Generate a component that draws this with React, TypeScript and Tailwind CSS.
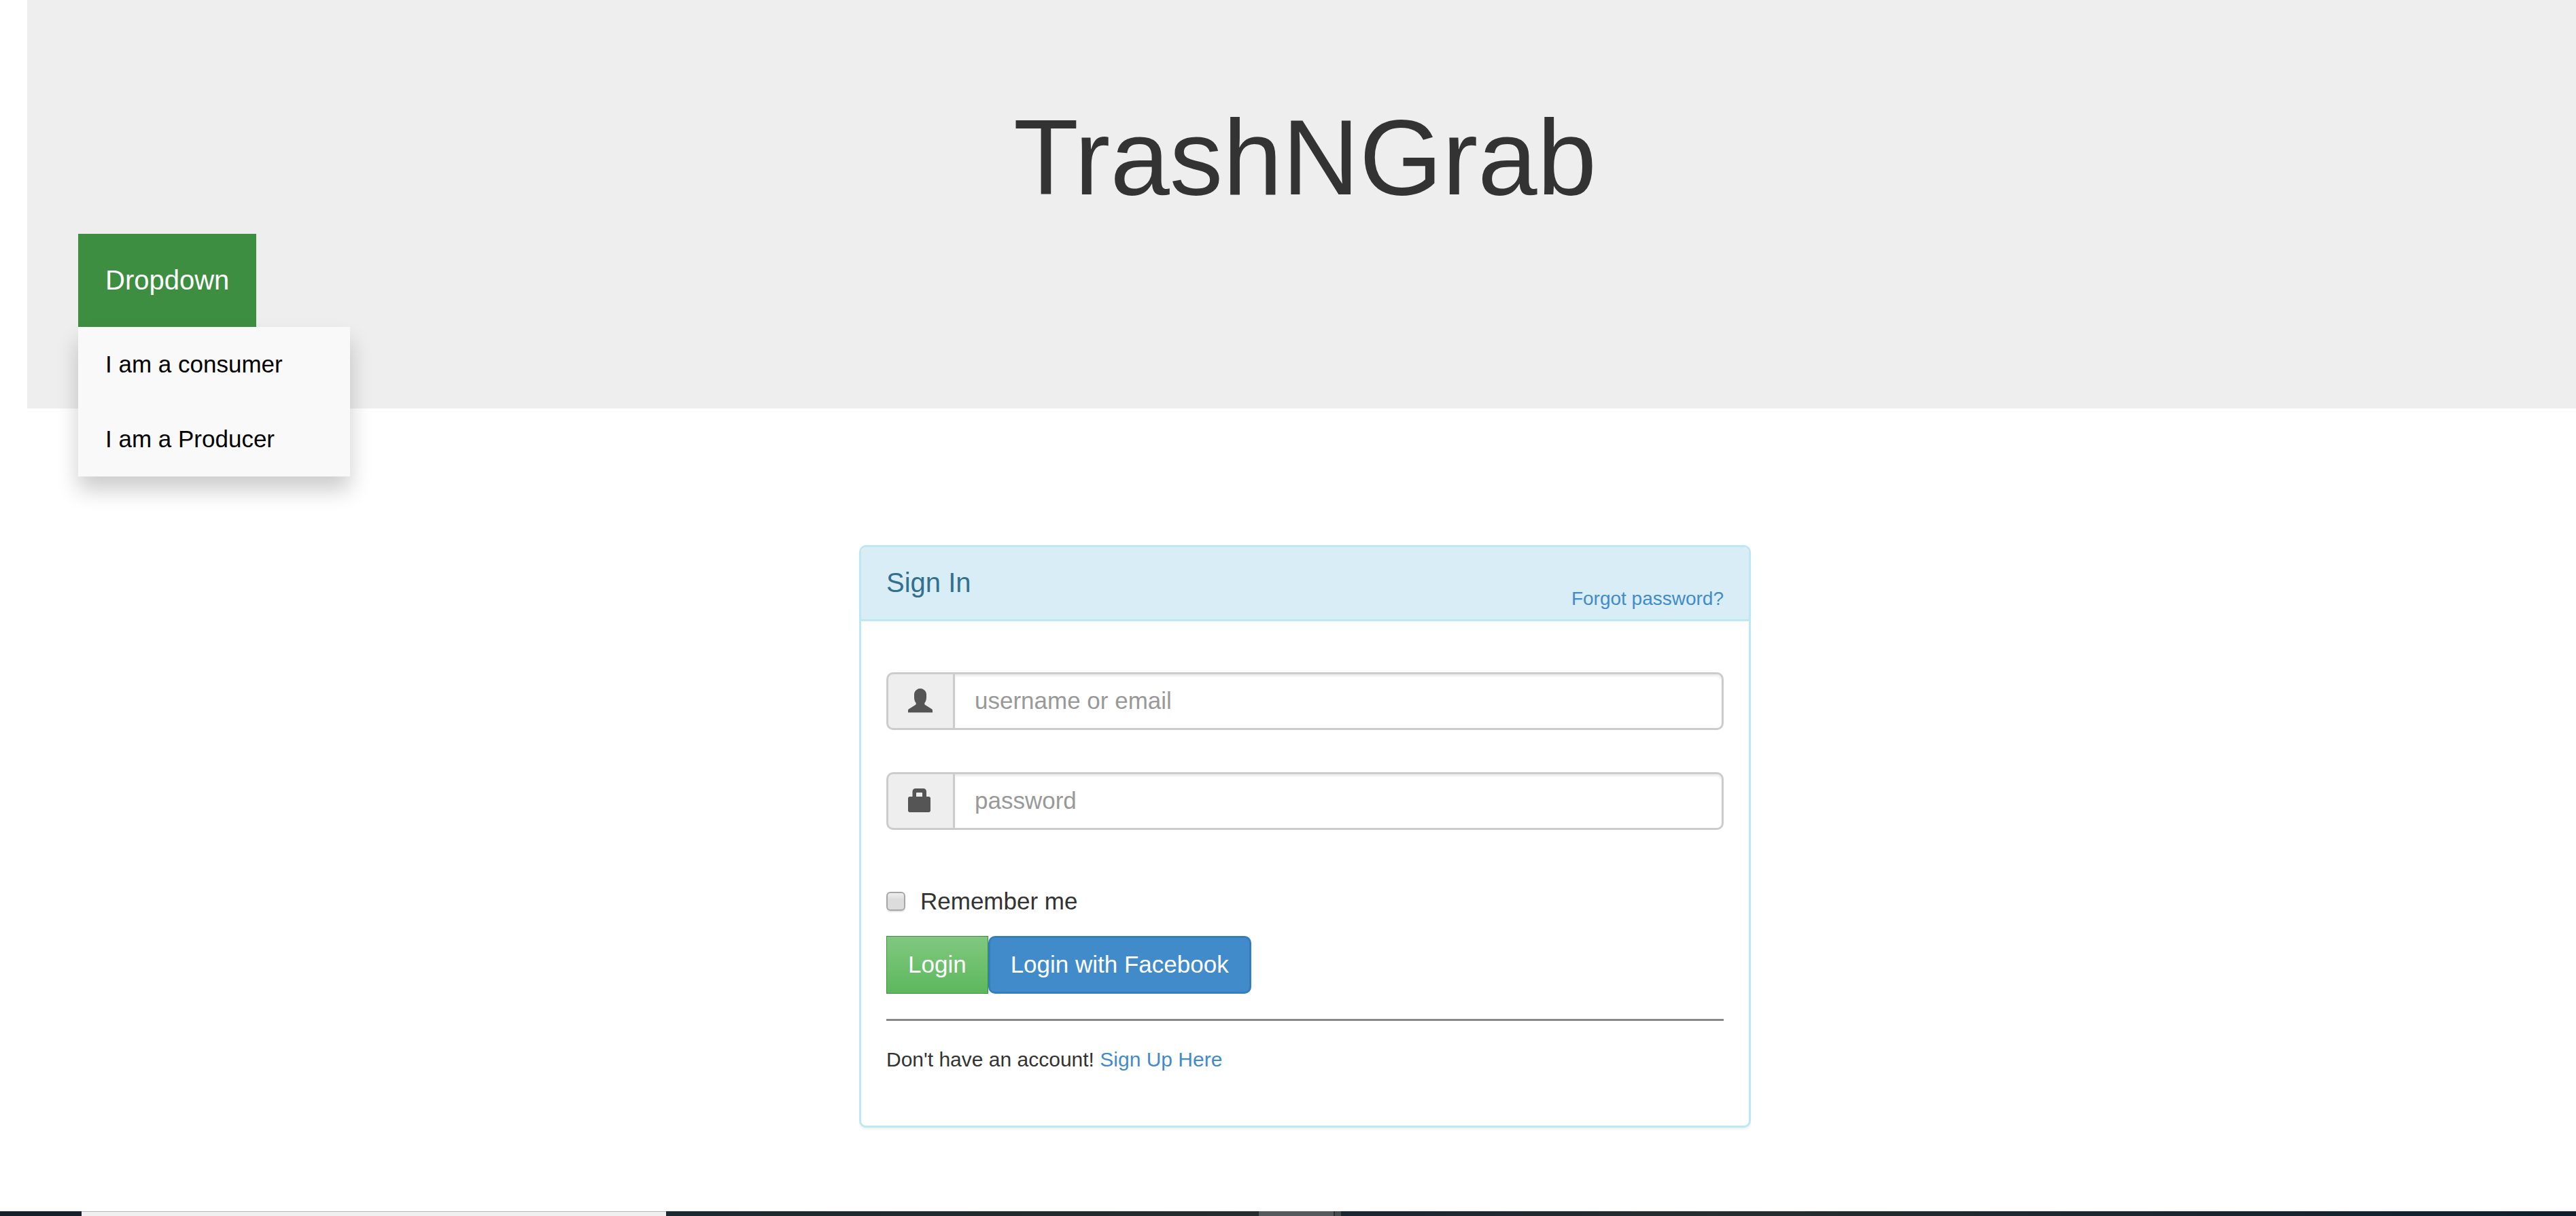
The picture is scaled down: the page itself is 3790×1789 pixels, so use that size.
import React, { useState } from 'react';

const roles = ['I am a consumer', 'I am a Producer'];

const UserIcon = () => (
  <svg viewBox="0 0 36 36" className="w-9 h-9" fill="#555" aria-hidden="true">
    <path d="M18 0c5.200 0 9 4 9 9v4c0 3.700-1.100 6.300-2.700 8.300v1.500c0 .6.300 1 .8 1.300L35 30.300c.6.400 1 .9 1 1.700v3.300H0V32c0-.8.400-1.300 1-1.700l9.900-6.200c.5-.3.800-.7.800-1.300v-1.500C10.100 19.300 9 16.700 9 13V9c0-5 3.800-9 9-9z" />
  </svg>
);

const LockIcon = () => (
  <svg viewBox="0 0 36 36" className="w-9 h-9" fill="#555" aria-hidden="true">
    <path
      fillRule="evenodd"
      d="M11 0h11.500C25.200 0 27 2 27 4.500V12h3.500c1.400 0 2.500 1.100 2.500 2.500v18c0 1.400-1.100 2.500-2.500 2.500h-28C1.100 35 0 33.900 0 32.500v-18C0 13.100 1.100 12 2.500 12h4V4.500C6.500 2 8.300 0 11 0zM13 6c-.6 0-1 .4-1 1v5h9V7c0-.6-.4-1-1-1z"
    />
  </svg>
);

interface FieldProps {
  id: string;
  type: string;
  label: string;
  value: string;
  onChange: (value: string) => void;
  icon: React.ReactNode;
}

const Field = ({ id, type, label, value, onChange, icon }: FieldProps) => (
  <div className="flex h-[85px] text-[35px]">
    <label
      htmlFor={id}
      className="flex items-start w-[98px] pl-[29px] pt-[21px] bg-[#eee] border-[3px] border-r-0 border-[#ccc] rounded-l-[10px]"
    >
      {icon}
    </label>
    <input
      id={id}
      type={type}
      aria-label={label}
      value={value}
      onChange={(e) => onChange(e.target.value)}
      placeholder={label}
      className="flex-1 min-w-0 px-[29px] bg-white border-[3px] border-[#ccc] rounded-r-[10px] text-[#555] placeholder:text-[#999] shadow-[inset_0_3px_3px_rgba(0,0,0,0.075)] focus:outline-none"
    />
  </div>
);

const Header = () => {
  const [open, setOpen] = useState(true);

  return (
    <header className="ml-10 bg-[#eee] pt-[153px] pb-[120px]">
      <h1 className="pl-[10px] text-center text-[157px] leading-[158px] text-[#333]">TrashNGrab</h1>
      <div className="relative w-fit ml-[75px] mt-[33px]">
        <button
          type="button"
          aria-expanded={open}
          onClick={() => setOpen(!open)}
          className="block p-10 bg-[#3e8e41] text-white text-[40px] leading-[57px] cursor-pointer"
        >
          Dropdown
        </button>
        {open && (
          <nav className="absolute left-0 top-full w-[400px] bg-[#f9f9f9] shadow-[0_20px_30px_rgba(0,0,0,0.2)]">
            {roles.map((role) => (
              <a key={role} href="#" className="block px-10 py-[30px] text-black text-[35px] leading-[50px]">
                {role}
              </a>
            ))}
          </nav>
        )}
      </div>
    </header>
  );
};

const SignIn = () => {
  const [username, setUsername] = useState('');
  const [password, setPassword] = useState('');
  const [remember, setRemember] = useState(false);

  return (
    <section className="w-full max-w-[1312px] bg-white border-[3px] border-[#bce8f1] rounded-[10px] shadow-[0_3px_3px_rgba(0,0,0,0.05)]">
      <div className="flex justify-between items-end h-[109px] px-[37px] bg-[#d9edf7] border-b-[3px] border-[#bce8f1] rounded-t-[7px]">
        <h2 className="pb-8 text-[40px] leading-[44px] text-[#31708f]">Sign In</h2>
        <a href="#" className="pb-[10px] text-[28px] leading-[40px] text-[#428bca]">Forgot password?</a>
      </div>
      <form onSubmit={(e) => e.preventDefault()} className="px-[37px] pt-[75px] pb-[76px]">
        <div className="flex flex-col gap-[62px]">
          <Field
            id="login-username"
            type="text"
            label="username or email"
            value={username}
            onChange={setUsername}
            icon={<UserIcon />}
          />
          <Field
            id="login-password"
            type="password"
            label="password"
            value={password}
            onChange={setPassword}
            icon={<LockIcon />}
          />
        </div>
        <label className="flex items-center gap-[22px] w-fit mt-[80px] text-[35px] leading-[50px] text-[#333]">
          <input
            type="checkbox"
            checked={remember}
            onChange={(e) => setRemember(e.target.checked)}
            className="appearance-none w-7 h-7 border-2 border-[#a6a6a6] rounded-[6px] bg-linear-to-b from-[#eee] to-[#dcdcdc] to-40% shadow-[0_2px_1px_rgba(0,0,0,0.1)] checked:bg-[#428bca]"
          />
          Remember me
        </label>
        <div className="flex mt-[26px] text-[35px] text-white">
          <button
            type="submit"
            className="h-[85px] px-[31px] border border-[#3e8f3e] bg-linear-to-b from-[#80c880] to-[#5cb85c]"
          >
            Login
          </button>
          <button
            type="button"
            className="h-[85px] px-[30px] border-[3px] border-[#357ebd] rounded-[10px] bg-[#428bca]"
          >
            Login with Facebook
          </button>
        </div>
        <p className="mt-[37px] pt-[35px] border-t-[3px] border-[#888] text-[30px] leading-[43px] text-[#333]">
          Don't have an account! <a href="#" className="text-[#428bca]">Sign Up Here</a>
        </p>
      </form>
    </section>
  );
};

const Taskbar = () => (
  <footer className="flex h-[7px] mt-auto">
    <div className="w-[120px] bg-[#16202a]" />
    <div className="w-[860px] bg-[#f0f0f0] border-t border-[#b5b5b5]" />
    <div className="w-[872px] bg-linear-to-r from-[#1c292e] to-[#272c2e]" />
    <div className="w-[110px] bg-[#565a5c]" />
    <div className="w-[11px] bg-[#464b4e] border-l-2 border-[#2b2f31]" />
    <div className="flex-1 bg-linear-to-r from-[#1c2630] via-[#282d2f] via-30% to-[#0e202d]" />
  </footer>
);

const App = () => {
  return (
    <div className="min-h-screen flex flex-col bg-white font-['Liberation_Sans',Arial,sans-serif]">
      <Header />
      <main className="flex justify-center pl-[50px] pt-[201px] pb-[50px]">
        <SignIn />
      </main>
      <Taskbar />
    </div>
  );
};

export default App;
